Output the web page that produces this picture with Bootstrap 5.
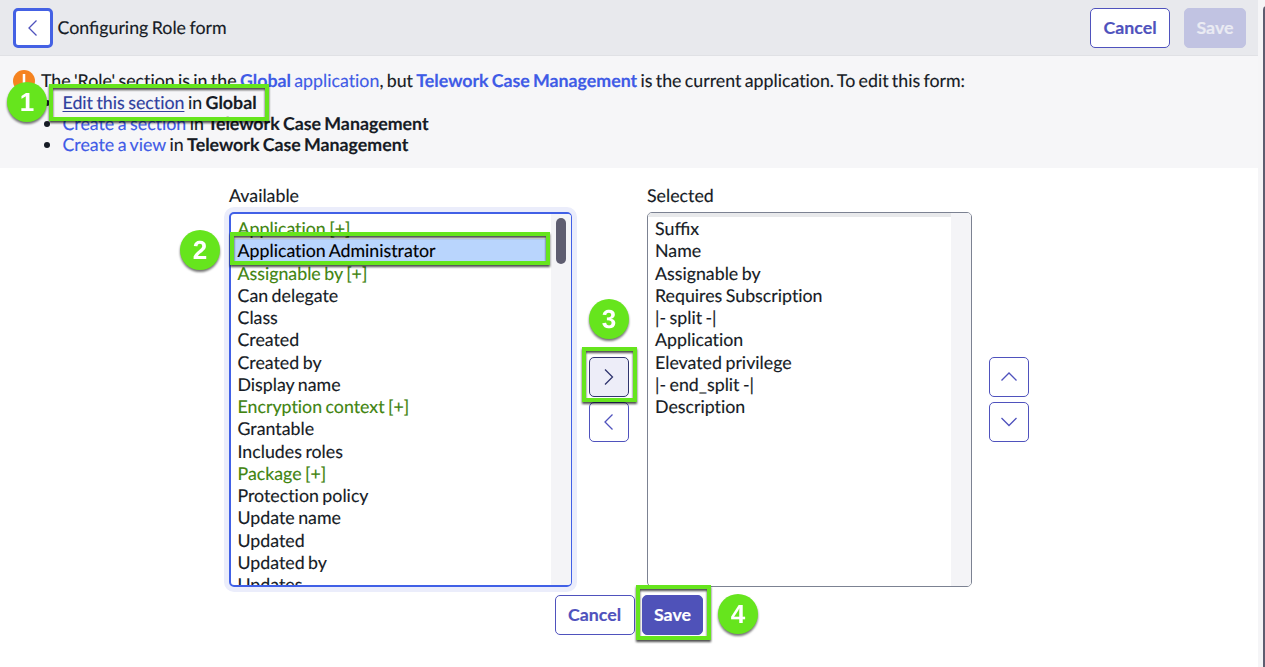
<!DOCTYPE html>
<html lang="en">
<head>
<meta charset="utf-8">
<title>Configuring Role form</title>
<link href="https://cdn.jsdelivr.net/npm/bootstrap@5.3.0/dist/css/bootstrap.min.css" rel="stylesheet">
<style>
body{font:400 17.8px/22px Lato,sans-serif;word-spacing:-1.08px;-webkit-text-stroke:.15px;text-rendering:geometricPrecision;font-variant-ligatures:none;color:#161b25;background:#f5f5f7;height:667px;overflow:hidden}
.page-area{width:1258px;height:667px;background:#fff}
.lig{font-variant-ligatures:common-ligatures}
.top-bar{height:56px;background:#e8e9ed;border-bottom:1px solid #e0e1e5;padding:0 12px 0 13px}
.title-text{margin:-2px 0 0 4.500px}
.ui-btn{height:40px;border:1px solid #4f52bd;border-radius:5px;background:#fff;color:#4f52bd;font:700 17.8px/36px Lato,sans-serif;padding:0 0 2px;text-align:center}
.ui-btn svg{display:block;margin:2px auto 0;fill:none;stroke:currentColor;stroke-width:1.3}
.sq{width:40px}
.wide{width:80px}
.bottom .wide{padding-right:1px}
.solid{background:#4f52b9;border-color:#4f52b9;color:#fff;width:61px}
.faded{background:#c1c3e2;border-color:#c1c3e2;color:#eaebf3;margin-left:14px;width:62px}
.back{border:3px solid #4461e4;border-radius:5px}
.notice{height:112px;background:#f6f6f8;padding:14px 0 0 13px;line-height:21.3px}
.notice a{color:#3f5be6;text-decoration:none}
.notice a.hov{color:#2f3f9e;text-decoration:underline;text-underline-offset:2px;text-decoration-thickness:1px}
.notice ul{padding-left:49.5px;margin:0;line-height:21px}
.first-line{margin-left:6px;word-spacing:-1.22px}
.warn{width:22px;height:22px;flex:none}
.columns{padding:15.5px 0 0 229px}
.pick{height:375px;overflow:hidden;border:1px solid #7c8292;border-radius:5px;line-height:22.27px;margin-top:6.5px}
.pick .opts{padding:4px 0 0 7px}
.pick .track{width:20px;background:#f4f4f7;flex:none}
.avail{width:343px;border:2px solid #4160e6;border-right-width:1px;box-shadow:0 0 0 5px #ebedfb}
.avail .opts{padding:3px 0 0}
.avail .opts div{padding-left:6.5px}
.avail .track{margin:-1px 0 -1px}
.thumb{width:10px;height:46px;border-radius:5px;background:#5e5d70;margin:5px 0 0 5px}
.chosen{width:325px}
.chosen .opts{box-shadow:inset 0 4px 0 #e8e9eb}
.green{color:#418410}
.avail .opts .sel{background:#b9d5fd;color:#000;margin-right:3px}
.hoverbtn{background:#ededf8;color:#30356f;border-color:#30356f}
.movers{padding-top:173px;gap:5px;margin-left:17px}
.hl{position:absolute;border:4px solid #66e51d;filter:drop-shadow(0 2px 1px rgba(0,0,0,.7));z-index:2;pointer-events:none}
.num{position:absolute;width:40px;height:40px;border-radius:50%;background:#66e51d;color:#fff;font:700 26px/41px "Liberation Sans",sans-serif;-webkit-text-stroke:0;text-align:center;filter:drop-shadow(0 2px 1px rgba(0,0,0,.55));z-index:3}
.bar-thumb{position:absolute;left:1263px;top:6px;width:8px;height:680px;border-radius:4px;background:#5e5d70}
.bottom{padding:8px 0 0 555px;gap:7px}
</style>
</head>
<body class="position-relative">
<div class="page-area">
<header class="top-bar d-flex align-items-center">
<button class="ui-btn sq back"><svg width="20" height="20"><path d="M13.5 2.500 6 10l7.500 7.500"/></svg></button>
<span class="title-text lig">Configuring Role form</span>
<button class="ui-btn wide ms-auto">Cancel</button>
<button class="ui-btn solid faded">Save</button>
</header>
<section class="notice position-relative">
<div class="d-flex"><svg class="warn" viewBox="0 0 22 22"><circle cx="11" cy="11" r="11" fill="#f58320"/><path d="M11 4v9M11 15v3" stroke="#fff" stroke-width="2.500"/></svg>
<span class="first-line">The 'Role' section is in the <a href="#"><b>Global</b> application</a>, but <a href="#"><b>Telework Case Management</b></a> is the current application. To edit this form:</span></div>
<ul>
<li><a href="#" class="hov">Edit this section</a> in <b>Global</b></li>
<li><a href="#">Create a section</a> in <b>Telework Case Management</b></li>
<li><a href="#">Create a view</a> in <b>Telework Case Management</b></li>
</ul>
<div class="hl" style="left:49px;top:28px;width:220px;height:37px"></div>
<div class="num" style="left:7px;top:26px">1</div>
</section>
<main>
<div class="columns d-flex position-relative">
<div><div>Available</div>
<div class="pick avail d-flex"><div class="opts flex-grow-1">
<div class="green">Application [+]</div><div class="sel">Application Administrator</div><div class="green">Assignable by [+]</div><div>Can delegate</div><div>Class</div><div>Created</div><div>Created by</div><div>Display name</div><div class="green">Encryption context [+]</div><div>Grantable</div><div>Includes roles</div><div class="green">Package [+]</div><div>Protection policy</div><div>Update name</div><div>Updated</div><div>Updated by</div><div>Updates</div>
</div><div class="track"><div class="thumb"></div></div></div></div>
<div class="movers d-flex flex-column">
<button class="ui-btn sq hoverbtn"><svg width="20" height="20"><path d="M6 2.500 13.500 10 6 17.500"/></svg></button>
<button class="ui-btn sq"><svg width="20" height="20"><path d="M13.500 2.500 6 10l7.500 7.500"/></svg></button>
</div>
<div style="margin-left:18px"><div>Selected</div>
<div class="pick chosen d-flex"><div class="opts flex-grow-1">
<div class="lig">Suffix</div><div>Name</div><div>Assignable by</div><div>Requires Subscription</div><div>|- split -|</div><div>Application</div><div>Elevated privilege</div><div>|- end_split -|</div><div>Description</div>
</div><div class="track"></div></div></div>
<div class="movers d-flex flex-column">
<button class="ui-btn sq"><svg width="20" height="20"><path d="M2.500 13.500 10 6l7.500 7.500"/></svg></button>
<button class="ui-btn sq"><svg width="20" height="20"><path d="M2.500 6 10 13.500 17.500 6"/></svg></button>
</div>
<div class="hl" style="left:230px;top:64px;width:320px;height:33px"></div>
<div class="num" style="left:180px;top:62px">2</div>
<div class="hl" style="left:582px;top:179px;width:55px;height:55px"></div>
<div class="num" style="left:589px;top:131px">3</div>
</div>
<div class="bottom d-flex position-relative">
<button class="ui-btn wide">Cancel</button>
<button class="ui-btn solid">Save</button>
<div class="hl" style="left:636px;top:-2px;width:75px;height:55px"></div>
<div class="num" style="left:718px;top:7px">4</div>
</div>
</main>
</div>
<div class="bar-thumb"></div>
<script src="https://cdn.jsdelivr.net/npm/bootstrap@5.3.0/dist/js/bootstrap.bundle.min.js"></script>
</body>
</html>
